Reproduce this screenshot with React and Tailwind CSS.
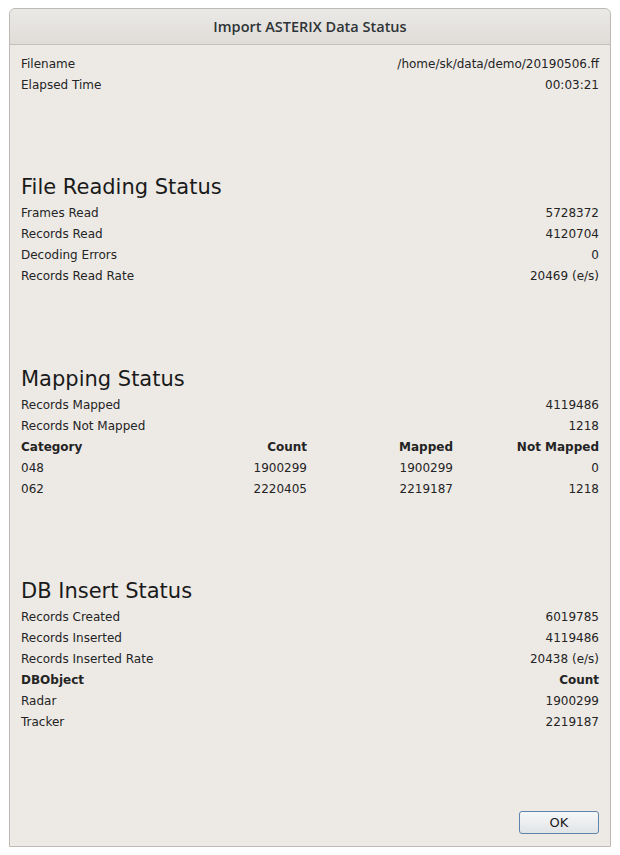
import React from 'react';

const FONT = { fontFamily: '"DejaVu Sans", sans-serif' };

function Row({ label, value, bold }) {
  return (
    <div className={`flex h-[21px] items-center justify-between text-[12px] ${bold ? 'font-bold' : ''}`}>
      <span>{label}</span>
      <span>{value}</span>
    </div>
  );
}

function Heading({ children }) {
  return (
    <h2 className="mt-[76px] flex h-[31.5px] items-center pt-[2px] text-[21px] leading-none text-[#1a1a1a]">
      {children}
    </h2>
  );
}

const CATEGORIES = [
  ['048', '1900299', '1900299', '0'],
  ['062', '2220405', '2219187', '1218'],
];

export default function App() {
  return (
    <div className="min-h-screen bg-white px-[9px] pt-[8px]" style={FONT}>
      <div className="flex h-[839px] w-[602px] flex-col rounded-t-[6px] border border-[#bdbab5] bg-[#edeae6] text-[#242424]">
        <div
          className="flex h-[36px] items-center justify-center rounded-t-[6px] border-b border-[#c4c1bc] bg-gradient-to-b from-[#ebe9e6] to-[#dfdcd8] text-[14.5px] font-semibold text-[#2e3436]"
          style={{ fontFamily: '"Open Sans", "Noto Sans", sans-serif' }}
        >
          Import ASTERIX Data Status
        </div>

        <div className="flex flex-1 flex-col pl-[11px] pr-[11px] pt-[8px]">
          <Row label="Filename" value="/home/sk/data/demo/20190506.ff" />
          <Row label="Elapsed Time" value="00:03:21" />

          <Heading>File Reading Status</Heading>
          <Row label="Frames Read" value="5728372" />
          <Row label="Records Read" value="4120704" />
          <Row label="Decoding Errors" value="0" />
          <Row label="Records Read Rate" value="20469 (e/s)" />

          <Heading>Mapping Status</Heading>
          <Row label="Records Mapped" value="4119486" />
          <Row label="Records Not Mapped" value="1218" />
          <div className="grid grid-cols-[140px_146px_146px_146px] text-[12px]">
            <div className="flex h-[21px] items-center font-bold">Category</div>
            <div className="flex h-[21px] items-center justify-end font-bold">Count</div>
            <div className="flex h-[21px] items-center justify-end font-bold">Mapped</div>
            <div className="flex h-[21px] items-center justify-end font-bold">Not Mapped</div>
            {CATEGORIES.map((c) => (
              <React.Fragment key={c[0]}>
                <div className="flex h-[21px] items-center">{c[0]}</div>
                <div className="flex h-[21px] items-center justify-end">{c[1]}</div>
                <div className="flex h-[21px] items-center justify-end">{c[2]}</div>
                <div className="flex h-[21px] items-center justify-end">{c[3]}</div>
              </React.Fragment>
            ))}
          </div>

          <Heading>DB Insert Status</Heading>
          <Row label="Records Created" value="6019785" />
          <Row label="Records Inserted" value="4119486" />
          <Row label="Records Inserted Rate" value="20438 (e/s)" />
          <Row label="DBObject" value="Count" bold />
          <Row label="Radar" value="1900299" />
          <Row label="Tracker" value="2219187" />

          <div className="mt-auto mb-[12px] flex justify-end">
            <button className="h-[23px] w-[80px] rounded-[3px] border border-[#5f84ab] bg-gradient-to-b from-[#f6f7f8] to-[#e1e4e7] text-[13px] text-[#1a1a1a]">
              OK
            </button>
          </div>
        </div>
      </div>
    </div>
  );
}
